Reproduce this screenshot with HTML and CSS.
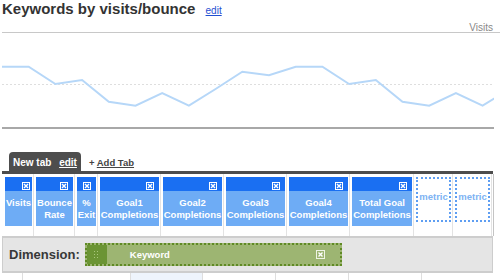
FILE: index.html
```html
<!DOCTYPE html>
<html>
  <head>
    <title>Keywords by visits/bounce</title>
    <link rel="stylesheet" href="styles.css">
  </head>
  <body>
    <div class="page">
      <div class="head">
        <h2 class="title">Keywords by visits/bounce <a href="#" class="edit">edit</a></h2>
        <div class="axis-label">Visits</div>
      </div>

      <svg class="chart" width="492" height="108" viewBox="0 0 492 108">
        <line x1="0" y1="51.5" x2="492" y2="51.5" stroke="#dedede" stroke-dasharray="2 2" />
        <line x1="0" y1="95" x2="492" y2="95" stroke="#a8a8a8" stroke-width="2" />
        <polyline fill="none" stroke="#b6d7f8" stroke-width="2"
          points="0,33.7 26.7,33.7 53.4,51 80.1,47 106.8,68.7 133.5,72.7 160.2,60 186.9,72.7 213.6,56 240.3,38.7 267,42.3 293.7,33.7 320.4,33.7 347.1,51 373.8,47 400.5,68.7 427.2,72.7 453.9,60 480.6,72.7 507.3,56" />
      </svg>

      <div class="tabs">
        <div class="tab">New tab <a href="#" class="tab-edit">edit</a></div>
        <div class="add-tab">+ <a href="#">Add Tab</a></div>
      </div>
      <div class="tab-bar"></div>

      <div class="columns">
        <div class="col-cell">
          <div class="col w-visits">
            <div class="col-head head-tight"><svg width="8" height="8" viewBox="0 0 8 8"><rect x="0.5" y="0.5" width="7" height="7" fill="none" stroke="#fff" /><path d="M2 2L6 6M6 2L2 6" stroke="#fff" stroke-width="1.4" /></svg></div>
            <div class="col-name">Visits</div>
          </div>
        </div>
        <div class="col-cell">
          <div class="col w-bounce">
            <div class="col-head"><svg width="8" height="8" viewBox="0 0 8 8"><rect x="0.5" y="0.5" width="7" height="7" fill="none" stroke="#fff" /><path d="M2 2L6 6M6 2L2 6" stroke="#fff" stroke-width="1.4" /></svg></div>
            <div class="col-name">Bounce<br>Rate</div>
          </div>
        </div>
        <div class="col-cell">
          <div class="col w-exit">
            <div class="col-head head-mid"><svg width="8" height="8" viewBox="0 0 8 8"><rect x="0.5" y="0.5" width="7" height="7" fill="none" stroke="#fff" /><path d="M2 2L6 6M6 2L2 6" stroke="#fff" stroke-width="1.4" /></svg></div>
            <div class="col-name">%<br>Exit</div>
          </div>
        </div>
        <div class="col-cell">
          <div class="col w-goal">
            <div class="col-head"><svg width="8" height="8" viewBox="0 0 8 8"><rect x="0.5" y="0.5" width="7" height="7" fill="none" stroke="#fff" /><path d="M2 2L6 6M6 2L2 6" stroke="#fff" stroke-width="1.4" /></svg></div>
            <div class="col-name">Goal1<br>Completions</div>
          </div>
        </div>
        <div class="col-cell">
          <div class="col w-goal">
            <div class="col-head"><svg width="8" height="8" viewBox="0 0 8 8"><rect x="0.5" y="0.5" width="7" height="7" fill="none" stroke="#fff" /><path d="M2 2L6 6M6 2L2 6" stroke="#fff" stroke-width="1.4" /></svg></div>
            <div class="col-name">Goal2<br>Completions</div>
          </div>
        </div>
        <div class="col-cell">
          <div class="col w-goal">
            <div class="col-head"><svg width="8" height="8" viewBox="0 0 8 8"><rect x="0.5" y="0.5" width="7" height="7" fill="none" stroke="#fff" /><path d="M2 2L6 6M6 2L2 6" stroke="#fff" stroke-width="1.4" /></svg></div>
            <div class="col-name">Goal3<br>Completions</div>
          </div>
        </div>
        <div class="col-cell">
          <div class="col w-goal">
            <div class="col-head"><svg width="8" height="8" viewBox="0 0 8 8"><rect x="0.5" y="0.5" width="7" height="7" fill="none" stroke="#fff" /><path d="M2 2L6 6M6 2L2 6" stroke="#fff" stroke-width="1.4" /></svg></div>
            <div class="col-name">Goal4<br>Completions</div>
          </div>
        </div>
        <div class="col-cell">
          <div class="col w-total">
            <div class="col-head"><svg width="8" height="8" viewBox="0 0 8 8"><rect x="0.5" y="0.5" width="7" height="7" fill="none" stroke="#fff" /><path d="M2 2L6 6M6 2L2 6" stroke="#fff" stroke-width="1.4" /></svg></div>
            <div class="col-name">Total Goal<br>Completions</div>
          </div>
        </div>
        <div class="col-cell">
          <div class="metric">metric</div>
        </div>
        <div class="col-cell">
          <div class="metric">metric</div>
        </div>
      </div>

      <div class="dimension">
        <span class="dim-label">Dimension:</span>
        <div class="pill">
          <div class="pill-handle">
            <svg width="5" height="7" viewBox="0 0 5 7">
              <rect x="0" y="0" width="1" height="1" fill="#a9c77c" />
              <rect x="3" y="0" width="1" height="1" fill="#a9c77c" />
              <rect x="0" y="3" width="1" height="1" fill="#a9c77c" />
              <rect x="3" y="3" width="1" height="1" fill="#a9c77c" />
              <rect x="0" y="6" width="1" height="1" fill="#a9c77c" />
              <rect x="3" y="6" width="1" height="1" fill="#a9c77c" />
            </svg>
          </div>
          <span class="pill-name">Keyword</span>
          <svg class="pill-close" width="9" height="9" viewBox="0 0 9 9"><rect x="0.5" y="0.5" width="8" height="8" fill="none" stroke="#eef3e4" /><path d="M2.5 2.5L6.5 6.5M6.5 2.5L2.5 6.5" stroke="#fff" stroke-width="1.4" /></svg>
        </div>
      </div>

      <div class="grid-row">
        <div class="grid-cell g1"></div>
        <div class="grid-cell g2"></div>
        <div class="grid-cell g3 shaded"></div>
        <div class="grid-cell g4"></div>
        <div class="grid-cell g4"></div>
        <div class="grid-cell g4"></div>
        <div class="grid-cell last"></div>
      </div>
    </div>
  </body>
</html>
```

FILE: styles.css
```css
body {
  margin: 0;
  font-family: "Liberation Sans", Arial, sans-serif;
  color: #333;
  background: #fff;
}

.page {
  padding-left: 2px;
}

.head {
  height: 32px;
  border-bottom: 1px solid #c8c8c8;
}

.title {
  margin: 0;
  font-size: 15px;
  line-height: 18px;
  font-weight: bold;
  color: #333;
}

.title .edit {
  margin-left: 6px;
  font-size: 10px;
  font-weight: normal;
  color: #1f4fd1;
}

.axis-label {
  margin-top: 2px;
  padding-right: 7px;
  text-align: right;
  font-size: 10px;
  line-height: 12px;
  color: #888;
}

.chart {
  display: block;
}

/* tabs */

.tabs {
  display: flex;
  align-items: flex-end;
  margin-top: 11px;
  padding-left: 7px;
}

.tab {
  height: 17px;
  padding: 2px 4px 0 4px;
  background: #4d4d4d;
  border-radius: 4px 4px 0 0;
  color: #fff;
  font-size: 10px;
  font-weight: bold;
  line-height: 17px;
}

.tab-edit {
  margin-left: 5px;
  color: #fff;
}

.add-tab {
  margin-left: 8px;
  font-size: 9.5px;
  font-weight: bold;
  line-height: 17px;
  color: #444;
}

.add-tab a {
  color: #444;
}

.tab-bar {
  width: 491px;
  height: 3px;
  background: #4d4d4d;
}

/* metric columns */

.columns {
  display: flex;
  width: 490px;
  height: 62px;
  padding-left: 1px;
  border-right: 1px solid #c4c4c4;
}

.col-cell {
  padding: 3px 1px 0 2px;
  border-right: 1px solid #e3e3e3;
}

.col {
  height: 49px;
  background: #6eacf5;
  color: #fff;
}

.w-visits { width: 27px; }
.w-bounce { width: 37px; }
.w-exit { width: 19px; }
.w-goal { width: 59px; }
.w-total { width: 60px; }

.col-head {
  display: flex;
  justify-content: flex-end;
  align-items: flex-end;
  height: 13px;
  padding: 0 5px 1px 0;
  background: #1a6ff2;
}

.col-head svg {
  display: block;
}

.head-tight {
  padding-right: 2px;
}

.head-mid {
  justify-content: center;
  padding-right: 0;
}

.col-name {
  padding-top: 6px;
  text-align: center;
  font-size: 9.5px;
  font-weight: bold;
  line-height: 12px;
  white-space: nowrap;
}

.metric {
  box-sizing: border-box;
  width: 35px;
  height: 45px;
  padding-top: 12px;
  border: 2px dotted #5e9ef2;
  background: #fff;
  color: #7db3f3;
  text-align: center;
  font-size: 9.5px;
  font-weight: bold;
  line-height: 12px;
}

/* dimension bar */

.dimension {
  display: flex;
  align-items: center;
  width: 489px;
  height: 33px;
  border-top: 2px solid #cdcdcd;
  border-bottom: 2px solid #cdcdcd;
  border-left: 1px solid #cdcdcd;
  border-right: 1px solid #cdcdcd;
  background: #e5e5e5;
}

.dim-label {
  padding-left: 6px;
  font-size: 13px;
  font-weight: bold;
  color: #383838;
}

.pill {
  box-sizing: border-box;
  display: flex;
  align-items: center;
  width: 257px;
  height: 23px;
  margin-left: 5px;
  border: 2px dotted #5f8a24;
  background: #9db572;
}

.pill-handle {
  display: flex;
  align-items: center;
  justify-content: center;
  width: 20px;
  height: 100%;
  background: #6b9434;
}

.pill-handle svg {
  display: block;
}

.pill-name {
  flex: 1;
  padding-left: 23px;
  color: #fff;
  font-size: 9.5px;
  font-weight: bold;
}

.pill-close {
  display: block;
  margin-right: 15px;
}

/* table grid below */

.grid-row {
  display: flex;
  width: 491px;
  height: 10px;
}

.grid-cell {
  border-right: 1px solid #dedede;
}

.g1 { width: 20px; }
.g2 { width: 107px; }
.g3 { width: 71px; }
.g4 { width: 72px; }

.shaded {
  background: #eef4fc;
}

.last {
  flex: 1;
  border-right: none;
}
```
